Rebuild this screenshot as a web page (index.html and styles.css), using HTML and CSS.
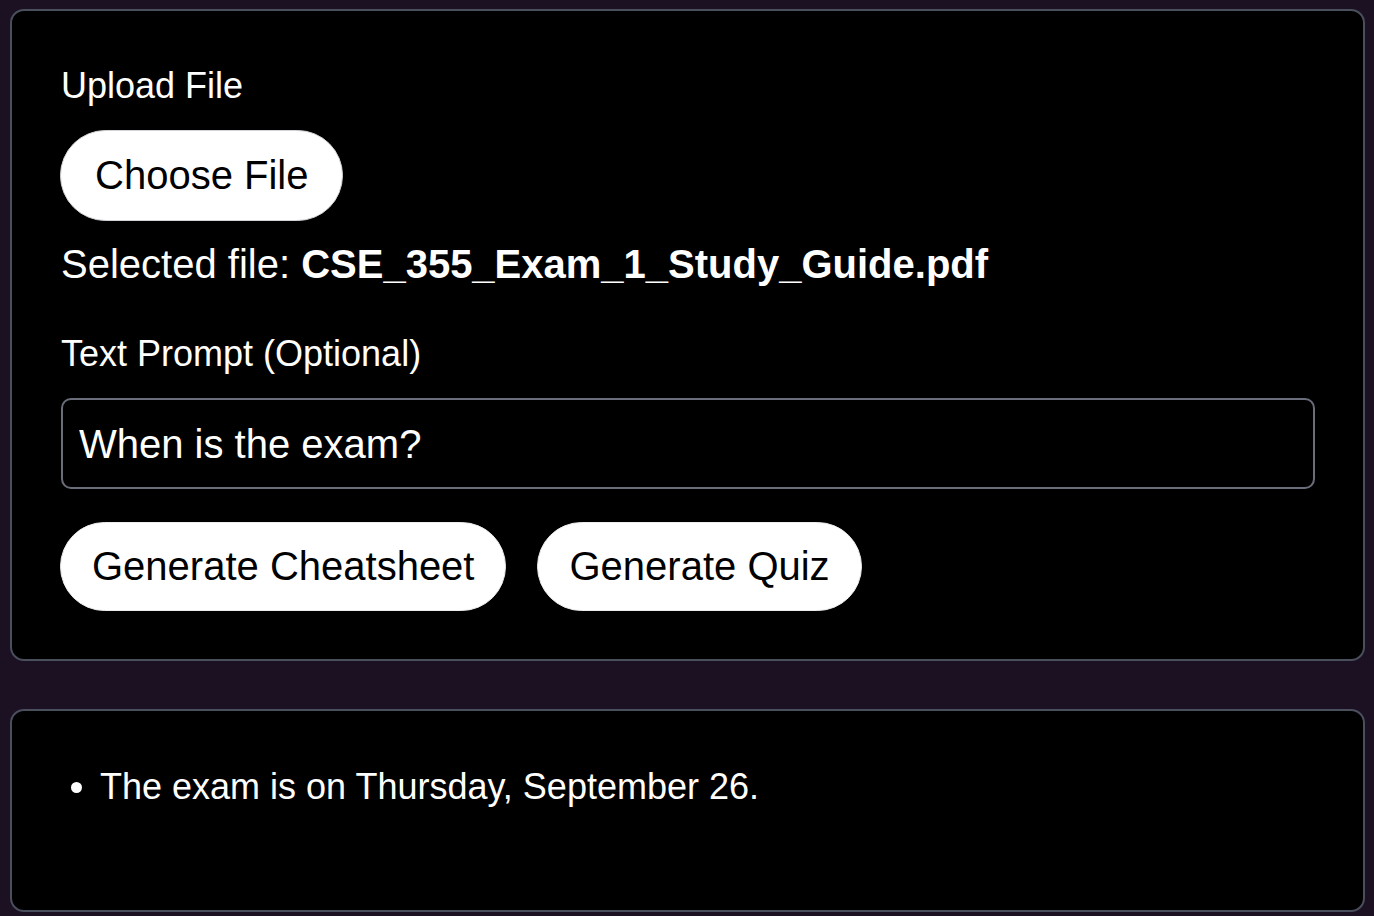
FILE: index.html
```html
<!DOCTYPE html>
<html lang="en">
<head>
<meta charset="utf-8">
<title>Study Helper</title>
<link rel="stylesheet" href="styles.css">
</head>
<body>
<main class="page">
  <section class="card form-card">
    <div class="label label-upload">Upload File</div>
    <label class="pill pill-file">Choose File</label>
    <div class="selected">Selected file: <strong>CSE_355_Exam_1_Study_Guide.pdf</strong></div>
    <div class="label label-prompt">Text Prompt (Optional)</div>
    <div class="prompt-input">When is the exam?</div>
    <div class="actions">
      <button class="pill pill-action">Generate Cheatsheet</button>
      <button class="pill pill-action">Generate Quiz</button>
    </div>
  </section>
  <section class="card result-card">
    <ul class="result-list">
      <li>The exam is on Thursday, September 26.</li>
    </ul>
  </section>
</main>
</body>
</html>
```

FILE: styles.css
```css
* { box-sizing: border-box; }

html, body {
  margin: 0;
  height: 100%;
}

body {
  background: #1c1122;
  color: #ffffff;
  font-family: "Liberation Sans", Arial, Helvetica, sans-serif;
  overflow: hidden;
}

.page {
  display: flex;
  flex-direction: column;
  gap: 48px;
  padding: 9px 9px 0 10px;
}

.card {
  background: #000000;
  border: 2px solid #4a4f5d;
  border-radius: 14px;
}

.form-card {
  display: flex;
  flex-direction: column;
  align-items: flex-start;
  padding: 54px 48px 48px 48px;
}

.label {
  font-size: 36px;
  line-height: 41px;
}

.label-upload { margin: 0 0 0 1px; }

.pill {
  display: inline-block;
  background: #ffffff;
  color: #000000;
  font-family: "Liberation Sans", Arial, Helvetica, sans-serif;
  font-size: 40px;
  line-height: 46px;
  border-radius: 999px;
}

.pill-file {
  margin-top: 24px;
  padding: 21px 34px 22px 34px;
  border: 1.5px solid #d2d2d8;
}

.selected {
  margin-top: 20px;
  margin-left: 1px;
  font-size: 40px;
  line-height: 46px;
}

.selected strong { font-weight: 700; }

.label-prompt { margin-top: 46px; margin-left: 1px; }

.prompt-input {
  margin-top: 24px;
  margin-left: 1px;
  margin-right: 0;
  align-self: stretch;
  height: 91px;
  display: flex;
  align-items: center;
  padding: 0 16px;
  border: 2px solid #6a6e7a;
  border-radius: 10px;
  font-size: 40px;
  line-height: 46px;
}

.actions {
  margin-top: 33px;
  display: flex;
  gap: 31px;
}

.pill-action {
  padding: 20px 31px 21px 31px;
  border: 1px solid #ececf0;
  margin: 0;
}

.result-card {
  padding: 55px 48px 103px 49px;
}

.result-list {
  margin: 0;
  padding-left: 39px;
  font-size: 36px;
  line-height: 41px;
}
```
